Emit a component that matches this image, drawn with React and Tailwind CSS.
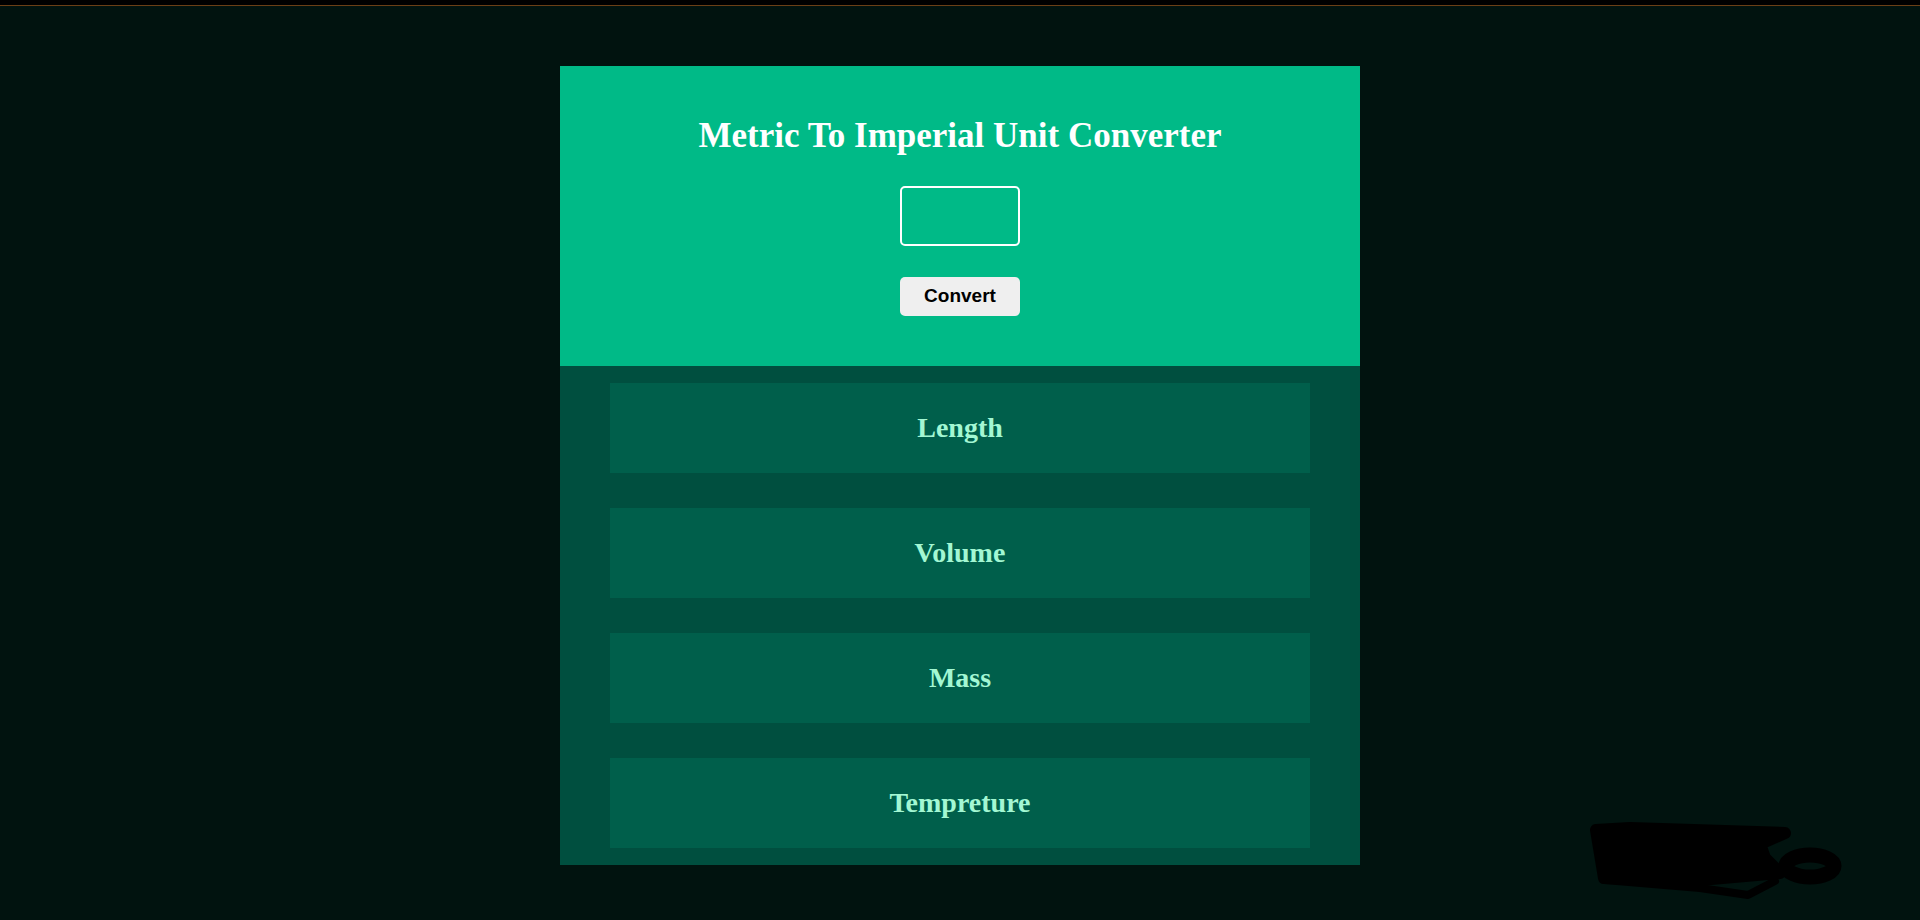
import React, { useState } from 'react';

const categories = ['Length', 'Volume', 'Mass', 'Tempreture'];

const App = () => {
  const [value, setValue] = useState('');

  return (
    <div className="relative min-h-[920px] bg-[#01130f] flex flex-col overflow-hidden">
      {/* Top strip */}
      <div className="h-[5px] bg-black" />
      <div className="h-px bg-[#6b3f16]" />

      <div className="flex justify-center pt-[60px]">
        <div className="w-[800px] flex flex-col">
          {/* Header */}
          <div className="h-[300px] bg-[#00ba87] flex flex-col items-center pt-[52px]">
            <h1 className="text-white font-bold text-[35px] leading-[35px] font-['Liberation_Serif',serif]">
              Metric To Imperial Unit Converter
            </h1>
            <input
              type="text"
              value={value}
              onChange={(e) => setValue(e.target.value)}
              className="mt-[33px] w-[120px] h-[60px] bg-transparent border-2 border-white rounded-[5px] outline-none text-white text-center"
            />
            <button className="mt-[31px] w-[120px] h-[39px] bg-[#efefef] rounded-[5px] text-black font-bold text-[19px] font-['Liberation_Sans',sans-serif]">
              Convert
            </button>
          </div>

          {/* Categories */}
          <div className="bg-[#004f3f] flex flex-col items-center gap-[35px] pt-[17px] pb-[17px]">
            {categories.map((cat) => (
              <div
                key={cat}
                className="w-[700px] h-[90px] bg-[#005f4b] flex items-center justify-center"
              >
                <h2 className="text-[#a3f7d3] font-bold text-[28px] font-['Liberation_Serif',serif]">
                  {cat}
                </h2>
              </div>
            ))}
          </div>
        </div>
      </div>

      {/* scribble over the corner */}
      <svg
        className="absolute left-[1560px] top-[800px]"
        width="360"
        height="120"
        viewBox="0 0 360 120"
        fill="none"
        stroke="#000"
        strokeLinecap="round"
        strokeLinejoin="round"
      >
        <path
          d="M36 30 L70 28 L225 33 L200 44 L205 58 L220 73 L140 80 L44 78 Z"
          fill="#000"
          strokeWidth="12"
        />
        <ellipse cx="250" cy="66" rx="24" ry="11" strokeWidth="15" />
        <path d="M45 80 L140 88 L188 95 L215 81" strokeWidth="8" />
      </svg>
    </div>
  );
};

export default App;
